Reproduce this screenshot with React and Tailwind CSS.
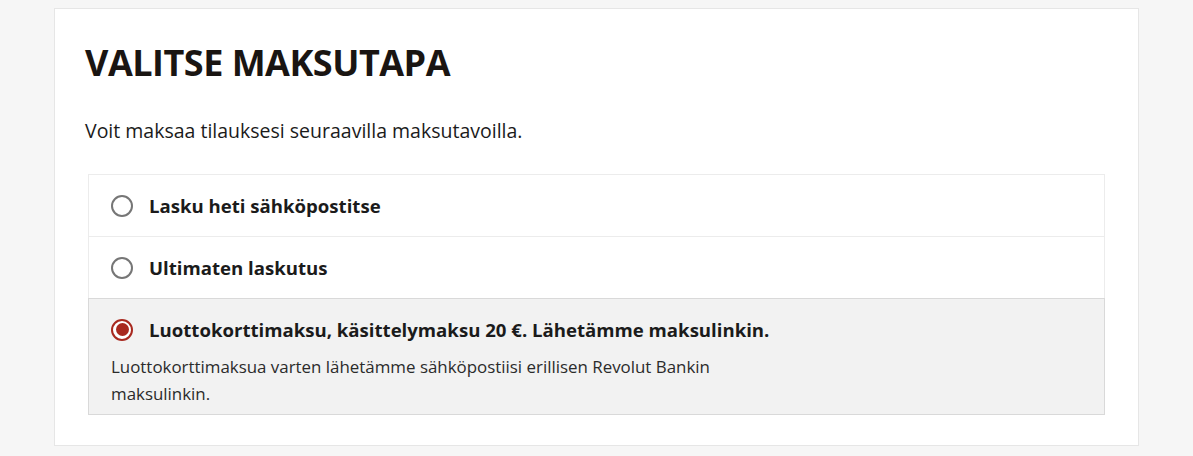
import React, { useState } from 'react';

const options = [
  { id: 'email', label: 'Lasku heti sähköpostitse' },
  { id: 'ultimaten', label: 'Ultimaten laskutus' },
  {
    id: 'card',
    label: 'Luottokorttimaksu, käsittelymaksu 20 €. Lähetämme maksulinkin.',
    info: 'Luottokorttimaksua varten lähetämme sähköpostiisi erillisen Revolut Bankin maksulinkin.',
  },
];

const Radio = ({ checked }) => (
  <span
    className={`flex h-[22px] w-[22px] shrink-0 items-center justify-center rounded-full border-2 ${
      checked ? 'border-[#a8291f] bg-white' : 'border-[#767676] bg-white'
    }`}
  >
    {checked && <span className="h-[13px] w-[13px] rounded-full bg-[#a8291f]" />}
  </span>
);

const App = () => {
  const [selected, setSelected] = useState('card');

  return (
    <div
      className="min-h-[456px] bg-[#f6f6f6] px-[54px] pt-[8px] pb-[10px]"
      style={{ fontFamily: '"Open Sans", "Noto Sans", sans-serif' }}
    >
      <div className="border border-[#e6e6e6] bg-white px-[33px] pt-[30px] pb-[30px] text-[#1b1b1b]">
        <h2 className="ml-[-3px] text-[36px] font-bold leading-[48px] tracking-[-0.5px] text-[#1a1512]">VALITSE MAKSUTAPA</h2>
        <p className="mt-[31px] ml-[-3px] text-[19.5px] leading-[26px]">Voit maksaa tilauksesi seuraavilla maksutavoilla.</p>

        <ul className="mt-[30px]">
          {options.map((opt) => {
            const active = selected === opt.id;
            return (
              <li
                key={opt.id}
                onClick={() => setSelected(opt.id)}
                className={`cursor-pointer border px-[22px] ${
                  active
                    ? 'border-[#d9d9d9] bg-[#f2f2f2] pt-[18px] pb-[7px]'
                    : 'border-[#ececec] border-b-0 bg-white py-[18px]'
                }`}
              >
                <div className="flex items-center gap-[16px]">
                  <Radio checked={active} />
                  <span className="text-[18.6px] font-bold leading-[25px]">{opt.label}</span>
                </div>
                {active && opt.info && (
                  <p className="mt-[11px] max-w-[620px] text-[16.9px] leading-[27px] text-[#2b2b2b]">{opt.info}</p>
                )}
              </li>
            );
          })}
        </ul>
      </div>
    </div>
  );
};

export default App;
